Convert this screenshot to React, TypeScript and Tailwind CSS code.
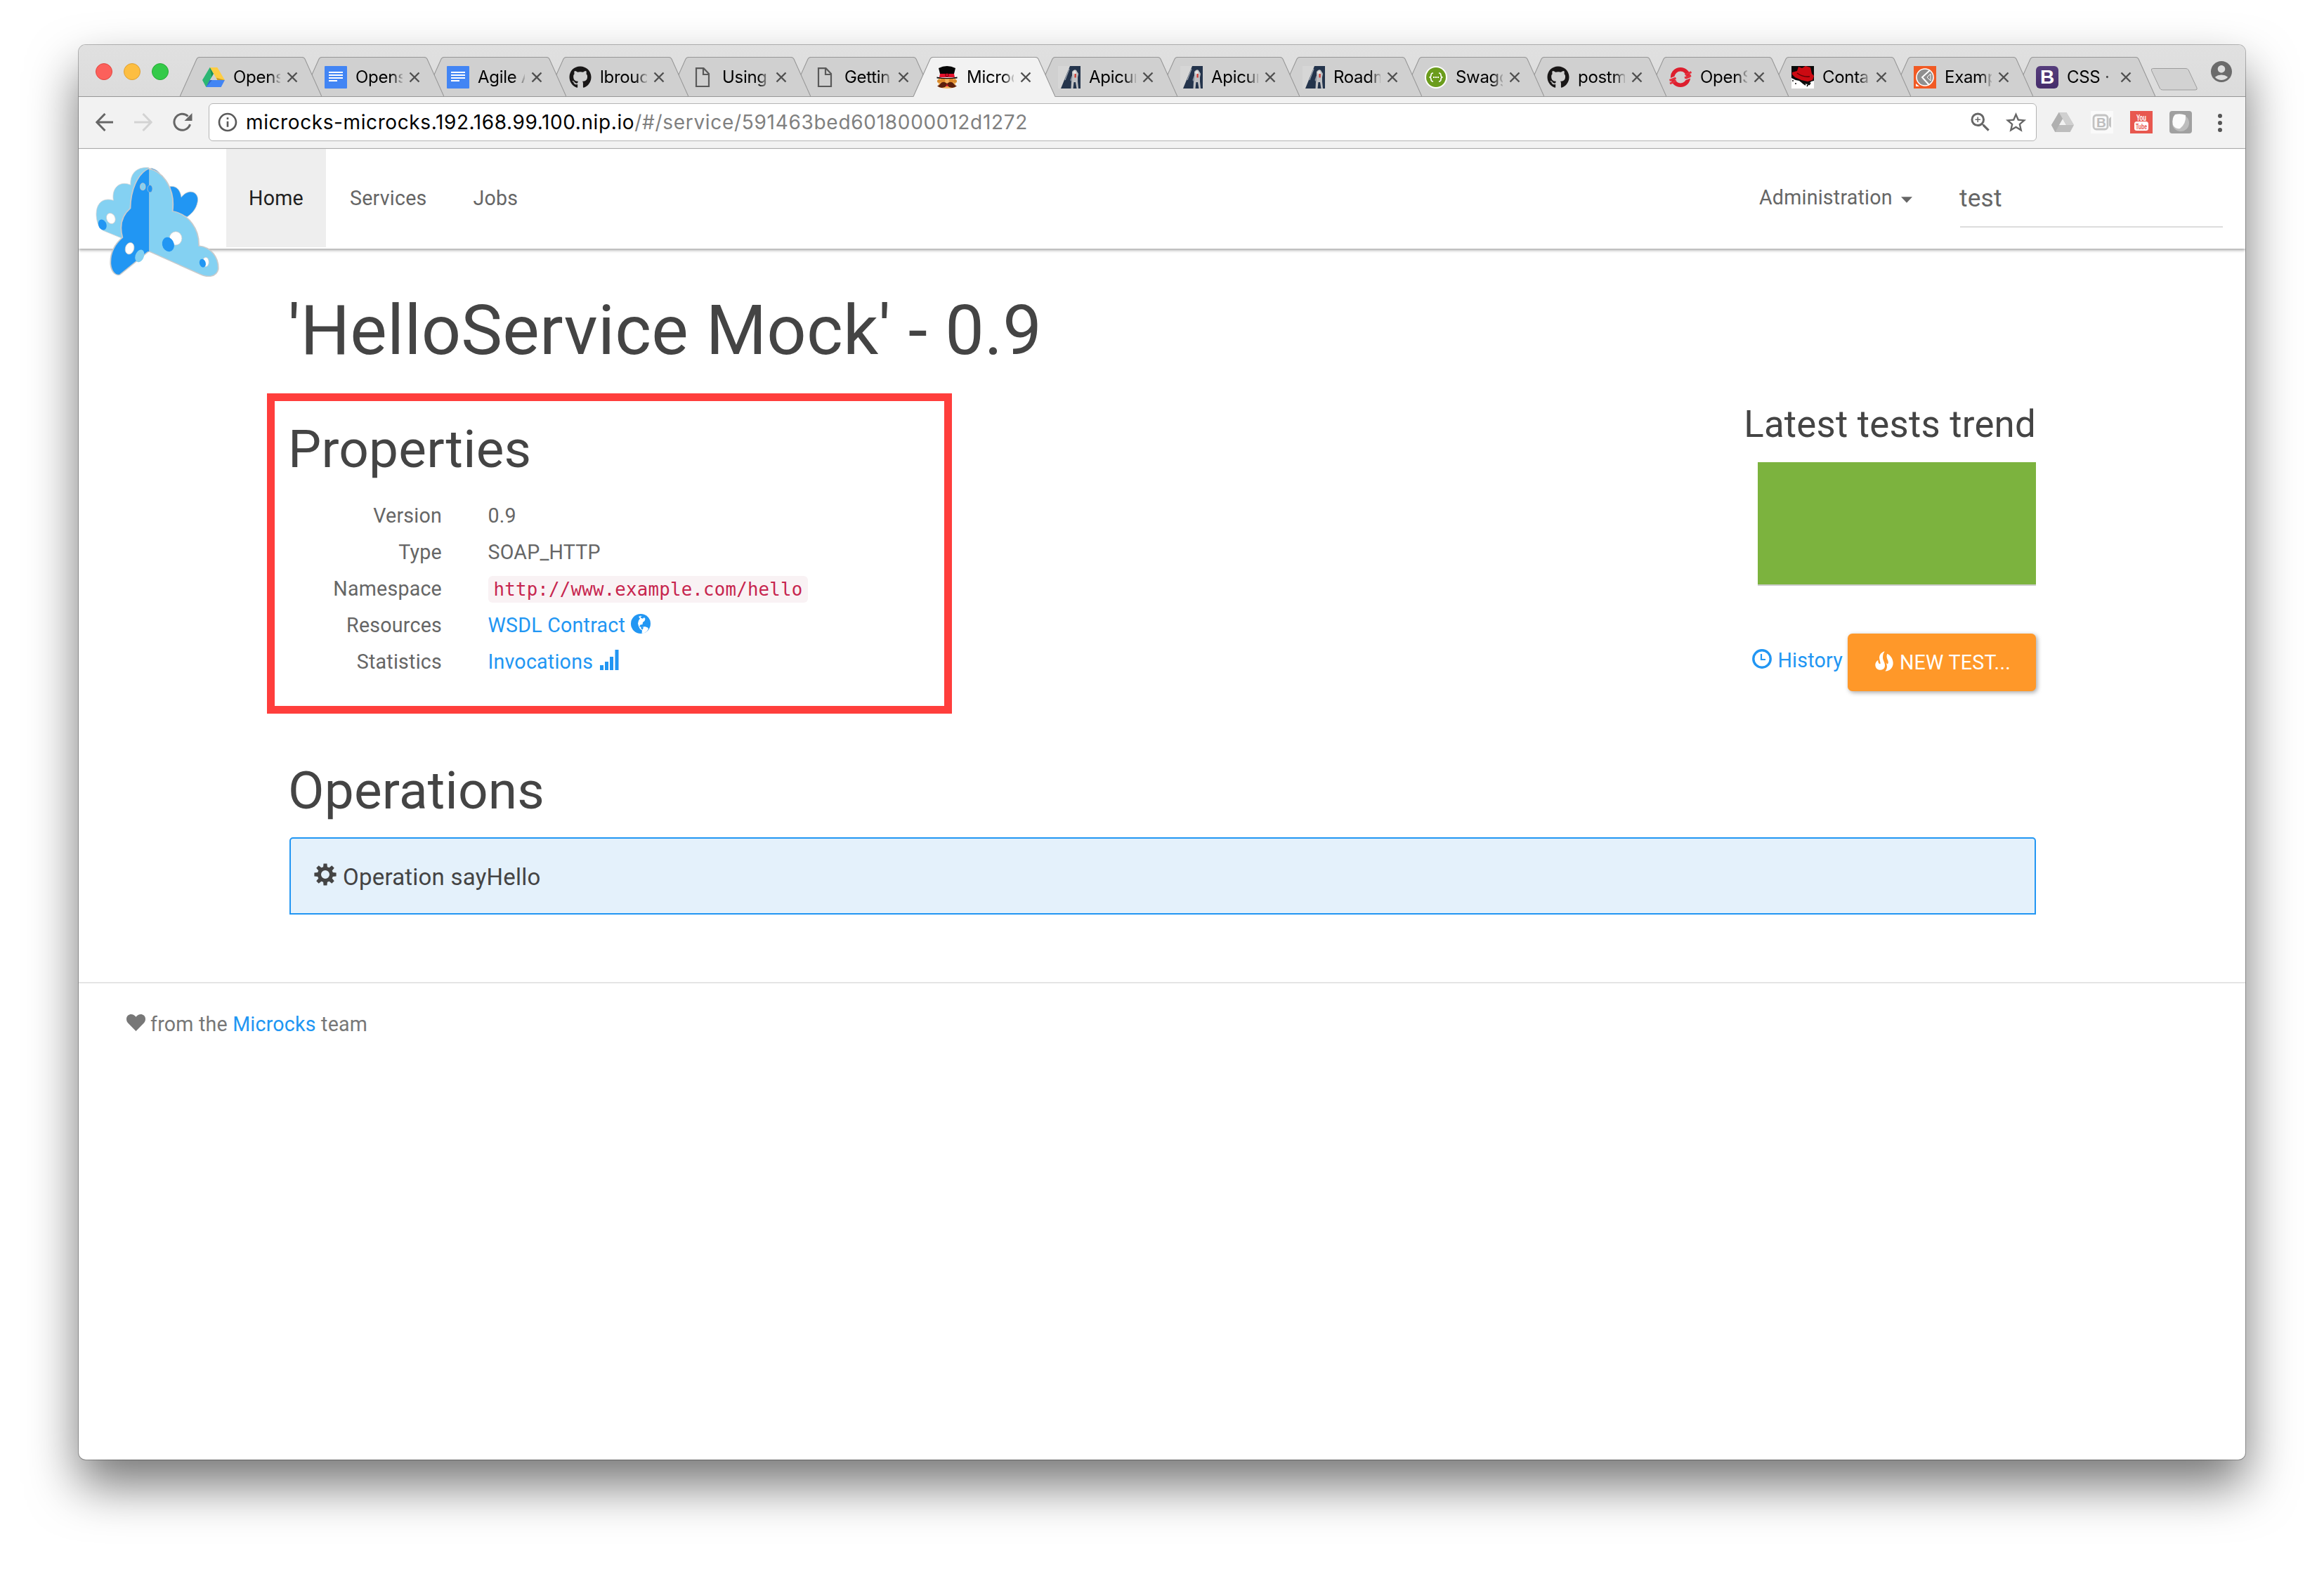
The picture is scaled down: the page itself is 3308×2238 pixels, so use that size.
import React from "react";
import { FaGithub } from "react-icons/fa";
import { MdAccountCircle, MdInfoOutline, MdStarBorder, MdZoomIn } from "react-icons/md";

/* ---------- favicons (32px) ---------- */

function DriveIcon() {
  return (
    <svg viewBox="0 0 96 96" className="size-8">
      <path d="M32 6 L64 6 L96 60 L64 60 Z" fill="#ffcd42" />
      <path d="M32 6 L0 60 L16 90 L48 34 Z" fill="#2bb673" />
      <path d="M32 60 L96 60 L80 90 L16 90 Z" fill="#4285f4" />
      <path d="M48 34 L32 6 L40 48 Z" fill="#1f8f57" />
      <path d="M64 60 L96 60 L60 50 Z" fill="#c79a22" />
      <path d="M32 60 L16 90 L42 60 Z" fill="#2f66c4" />
      <path d="M48 34 L33 60 L63 60 Z" fill="#d0d0d0" />
    </svg>
  );
}

function DocsIcon() {
  return (
    <svg viewBox="0 0 32 32" className="size-8">
      <rect width="32" height="32" rx="1" fill="#4285f4" />
      <path d="M6 9h20M6 13h20M6 17h20M6 21h12" stroke="#fff" strokeWidth="2" />
    </svg>
  );
}

function PageIcon() {
  return (
    <svg viewBox="0 0 32 32" className="size-8">
      <path d="M7 3.2h10.5L25 11v18H7z M17 3.2V12h8" fill="none" stroke="#5a5a5a" strokeWidth="2.2" />
    </svg>
  );
}

function MustacheIcon() {
  return (
    <svg viewBox="0 0 32 32" className="size-8">
      <path d="M4 17h24v13q-12 4-24 0z" fill="#f3b25e" />
      <circle cx="4.500" cy="21.500" r="2.500" fill="#d98a2b" />
      <circle cx="27.500" cy="21.500" r="2.500" fill="#d98a2b" />
      <circle cx="10" cy="21" r="3.500" fill="#e08a2a" />
      <circle cx="22" cy="21" r="3.500" fill="#e08a2a" />
      <path d="M4 3q12-6 24 0l-2 8H6z" fill="#050505" />
      <path d="M6 11h20l1 5H5z" fill="#e3122d" />
      <path d="M1.500 15.500q14.500 3 29 0v2q-14.500 1.500-29 0z" fill="#050505" />
      <circle cx="16" cy="12.800" r="2.200" fill="#e3122d" stroke="#60000d" />
      <path d="M16 25q-5-4-9-0.500-1.500 3-5 4 5 3.500 9 2 4-1 5-4 1 3 5 4 4 1.500 9-2-3.500-1-5-4-4-3.500-9 0.500z" fill="#5b1f0c" />
      <rect x="14.800" y="26.500" width="2.400" height="2.400" fill="#e3122d" />
    </svg>
  );
}

function ApicurioIcon() {
  return (
    <svg viewBox="0 0 32 32" className="size-8">
      <rect width="32" height="32" fill="#d6d6d6" />
      <path d="M17 0H32V32H4Z" fill="#24344c" />
      <path d="M16 4L10 20" stroke="#9fa6b0" strokeWidth="1.200" />
      <path d="M20 8q3-4 6-2l3 5-1 5 0 6 1 10h-2.500l-1.500-9-2.500 0-1 9h-3l0.500-10 1-5z" fill="#bfc0c3" />
      <path d="M21 9l3-3 2 4-2 4z" fill="#e6e6e6" />
      <path d="M17.500 20l2-6 1 1-1 8z" fill="#8f97a3" />
      <rect x="23.500" y="11" width="2.200" height="5.500" fill="#d3382f" />
    </svg>
  );
}

function SwaggerIcon() {
  return (
    <svg viewBox="0 0 32 32" className="size-8">
      <circle cx="16" cy="16" r="16" fill="#fff" />
      <circle cx="16" cy="16" r="14" fill="#6b9c1c" />
      <path
        d="M12 10q-3 0-3 3 0 3-2.500 3 2.500 0 2.500 3 0 3 3 3M20 10q3 0 3 3 0 3 2.500 3-2.500 0-2.500 3 0 3-3 3"
        fill="none"
        stroke="#fff"
        strokeWidth="1.600"
      />
      <path d="M12 16h2M15 16h2M18 16h2" stroke="#fff" strokeWidth="1.800" />
    </svg>
  );
}

function OpenShiftIcon() {
  return (
    <svg viewBox="0 0 32 32" className="size-8">
      <circle cx="16" cy="16" r="11.300" fill="none" stroke="#dd1f2e" strokeWidth="5.600" />
      <path d="M0.500 20.500l9-3.500M1 25l9-4" stroke="#e5303d" strokeWidth="3" />
      <path d="M22.500 12.500l9-4M22 17l9-3.500" stroke="#e5303d" strokeWidth="3" />
      <path d="M1.500 17.800l8-3.200M22 20l8.500-3.400" stroke="#d0d0d0" strokeWidth="1.300" />
    </svg>
  );
}

function RedHatIcon() {
  return (
    <svg viewBox="0 0 32 32" className="size-8">
      <rect width="32" height="32" fill="#0a0a0a" />
      <path d="M0 17L6 20 11 21 16 25 24 26 28 22 32 21V32H0z" fill="#fff" />
      <path d="M1 12l0-3 7-2 2-6 5 2 5-3 7 2 2 9 3 3-2 6-7 2-9-2-9-4z" fill="#cc0a12" />
      <path d="M8 10q8 6 18 5" fill="none" stroke="#5c0206" strokeWidth="1.500" />
      <path d="M1 21h2M5 25h2M16 24l4 3M22 29l3-5M27 24l-2 3" stroke="#0a0a0a" strokeWidth="1.600" />
    </svg>
  );
}

function ExampleIcon() {
  return (
    <svg viewBox="0 0 32 32" className="size-8">
      <rect width="32" height="32" fill="#f15a24" />
      <circle cx="16" cy="16" r="12" fill="#8f8f8f" stroke="#fff" strokeWidth="1.600" />
      <path d="M23 6L12 16l10 11" fill="none" stroke="#fff" strokeWidth="2" />
      <path d="M24 11v10l-5-5z" fill="#8f8f8f" stroke="#fff" strokeWidth="1" />
      <path d="M3 25l5 4H3z" fill="#fff" />
    </svg>
  );
}

function BootstrapIcon() {
  return (
    <span className="flex size-8 items-center justify-center rounded-[6px] bg-linear-to-b from-[#563d7c] to-[#452d6b] font-['Liberation_Sans',sans-serif] text-[28px] leading-none font-bold text-white">
      B
    </span>
  );
}

function OctocatIcon() {
  return <FaGithub className="size-8 text-[#191717]" />;
}

/* ---------- browser chrome ---------- */

const tabs: { title: string; Icon: () => React.ReactElement; active?: boolean }[] = [
  { title: "Opens", Icon: DriveIcon },
  { title: "Opens", Icon: DocsIcon },
  { title: "Agile A", Icon: DocsIcon },
  { title: "lbrouc", Icon: OctocatIcon },
  { title: "Using", Icon: PageIcon },
  { title: "Gettin", Icon: PageIcon },
  { title: "Microc", Icon: MustacheIcon, active: true },
  { title: "Apicur", Icon: ApicurioIcon },
  { title: "Apicur", Icon: ApicurioIcon },
  { title: "Roadm", Icon: ApicurioIcon },
  { title: "Swagg", Icon: SwaggerIcon },
  { title: "postm", Icon: OctocatIcon },
  { title: "OpenS", Icon: OpenShiftIcon },
  { title: "Conta", Icon: RedHatIcon },
  { title: "Examp", Icon: ExampleIcon },
  { title: "CSS ·", Icon: BootstrapIcon },
];

function Tab({ index }: { index: number }) {
  const { title, Icon, active } = tabs[index];
  return (
    <div
      className="relative -mr-7 flex h-[57px] w-[202px] shrink-0 pt-[13px] pl-8"
      style={{ zIndex: active ? 30 : 20 - index }}
    >
      <svg viewBox="0 0 202 57" className="absolute inset-0 h-[57px] w-[202px]">
        <path
          d="M0 57 L24 3 Q25.500 0.500 28 0.500 L174 0.500 Q176.500 0.500 178 3 L202 57 Z"
          fill={active ? "#f2f2f2" : "#d0d0d0"}
        />
        <path
          d="M0 56.500 L24 3 Q25.500 0.500 28 0.500 L174 0.500 Q176.500 0.500 178 3 L202 56.500"
          fill="none"
          stroke="#979797"
          strokeWidth="1.100"
        />
        {!active && <path d="M0 56.500H202" stroke="#979797" />}
      </svg>
      <span className="relative size-8 shrink-0">
        <Icon />
      </span>
      <span className="relative ml-3 w-[67px] overflow-hidden text-[24px] leading-8 tracking-[-0.3px] whitespace-nowrap text-black [mask-image:linear-gradient(to_right,#000_76%,transparent_104%)]">
        {title}
      </span>
      <svg viewBox="0 0 16 16" className="relative mt-2 ml-[9px] size-4 shrink-0">
        <path d="M1.500 1.500l13 13M14.500 1.500l-13 13" stroke="#505050" strokeWidth="2.400" />
      </svg>
    </div>
  );
}

function TabStrip() {
  return (
    <div className="flex h-[74px] border-b border-[#979797] bg-linear-to-b from-[#e0e0e0] to-[#dcdcdc]">
      <div className="flex w-36 shrink-0 gap-4 pt-[26px] pl-6">
        <span className="size-6 rounded-full border border-[#e2463f] bg-[#fc605b]" />
        <span className="size-6 rounded-full border border-[#dea032] bg-[#fdbe41]" />
        <span className="size-6 rounded-full border border-[#27aa35] bg-[#34ca49]" />
      </div>
      <div className="mt-[17px] flex h-[57px]">
        {tabs.map((_, i) => (
          <Tab key={i} index={i} />
        ))}
      </div>
      <svg viewBox="0 0 68 34" className="mt-8 ml-[21px] h-[34px] w-[68px] shrink-0">
        <path
          d="M3.500 1.500H50q3 0 4 2L66 29q1 3-2 3H17.500q-3 0-4-2L1.500 4.500q-1-3 2-3z"
          fill="#d2d2d2"
          stroke="#9c9c9c"
        />
      </svg>
      <MdAccountCircle className="mt-5 ml-[15px] size-9 shrink-0 text-[#6b6b6b]" />
    </div>
  );
}

function Toolbar() {
  return (
    <div className="flex h-[74px] border-b border-[#b4b4b4] bg-[#f2f2f2] pt-[9px]">
      <svg viewBox="0 0 26 26" className="mt-[14px] ml-6 h-[26px] w-[26px] shrink-0">
        <path d="M25 13H2M13.500 1L1.800 13l11.700 12" fill="none" stroke="#666" strokeWidth="3" />
      </svg>
      <svg viewBox="0 0 26 26" className="mt-[14px] ml-[29px] h-[26px] w-[26px] shrink-0">
        <path d="M0 13h23.500M12.500 1l11.700 12-11.700 12" fill="none" stroke="#d3d3d3" strokeWidth="3" />
      </svg>
      <svg viewBox="0 0 28 28" className="mt-[13px] ml-[29px] size-7 shrink-0">
        <path d="M24.500 17A11.500 11.500 0 1 1 21.500 5.500" fill="none" stroke="#666" strokeWidth="3" />
        <path d="M27.500 1V12H16.500z" fill="#666" />
      </svg>
      <div className="ml-[23px] flex h-[54px] w-[2602px] shrink-0 items-center rounded-[6px] border border-[#b4b4b4] bg-white pr-[11px] pl-[10px]">
        <MdInfoOutline className="size-8 text-[#5a5a5a]" />
        <p className="ml-[10px] flex-1 pt-px text-[28px] leading-[53px] text-black">
          <span className="tracking-[0.6px]">microcks-microcks.192.168.99.100.nip.io</span>
          <span className="tracking-[0.7px] text-[#808080]">/#/service/591463bed6018000012d1272</span>
        </p>
        <MdZoomIn className="size-9 text-[#666]" />
        <MdStarBorder className="ml-[15px] size-[35px] text-[#666]" />
      </div>
      <svg viewBox="0 0 96 96" className="mt-[11px] ml-[21px] size-8 shrink-0">
        <path d="M32 6H64L96 60 80 90H16L0 60Z" fill="#bdbdbd" />
        <path d="M32 6H64L96 60H64Z" fill="#d0d0d0" />
        <path d="M0 60L32 6 48 34 16 90Z" fill="#b0b0b0" />
        <path d="M48 34L33 60H63Z" fill="#f2f2f2" />
      </svg>
      <svg viewBox="0 0 32 32" className="mt-[11px] ml-6 size-8 shrink-0">
        <rect width="32" height="32" fill="#fafafa" />
        <rect x="4" y="6" width="20" height="20" rx="4" fill="none" stroke="#c3c3c3" strokeWidth="2.800" />
        <path d="M29 8v16l-3-3V11z" fill="#c3c3c3" />
        <text x="8" y="23" fontFamily="Liberation Sans, sans-serif" fontWeight="bold" fontSize="19" fill="#bdbdbd">
          B
        </text>
      </svg>
      <svg viewBox="0 0 32 32" className="mt-[11px] ml-6 size-8 shrink-0">
        <rect width="32" height="32" fill="#e8584f" />
        <rect x="6" y="15" width="20" height="13" rx="3.500" fill="#fff" />
        <text x="9" y="13.500" textLength="14" lengthAdjust="spacingAndGlyphs" fontFamily="Liberation Sans, sans-serif" fontWeight="bold" fontSize="12" fill="#fff">
          You
        </text>
        <text x="8" y="26" textLength="16" lengthAdjust="spacingAndGlyphs" fontFamily="Liberation Sans, sans-serif" fontWeight="bold" fontSize="11" fill="#e8584f">
          Tube
        </text>
      </svg>
      <svg viewBox="0 0 32 32" className="mt-[11px] ml-6 size-8 shrink-0">
        <rect width="32" height="32" rx="4" fill="#a0a0a0" />
        <circle cx="16" cy="17" r="12" fill="#bdbdbd" />
        <path d="M8 5q8-2 15 1 1 12-8 19-7 1-10-5-2-10 3-15z" fill="#fbfbfb" />
      </svg>
      <div className="mt-[15px] ml-[37px] flex flex-col gap-1">
        <span className="size-[6px] rounded-full bg-[#555]" />
        <span className="size-[6px] rounded-full bg-[#555]" />
        <span className="size-[6px] rounded-full bg-[#555]" />
      </div>
    </div>
  );
}

/* ---------- application ---------- */

function MicrocksLogo() {
  return (
    <svg viewBox="80 114 395 468" preserveAspectRatio="none" className="absolute top-[26px] left-6 h-[156px] w-[176px]">
      <g stroke="#c9cbcc" strokeWidth="4">
        <path
          d="M250 116C205 112 190 150 192 190C160 170 130 200 137 256C100 240 78 275 83 330C86 362 95 380 110 388L165 418L250 300Z"
          fill="#84d1f2"
          stroke="#d3d3d3"
          strokeWidth="2"
        />
        <path d="M318 196C345 192 352 225 354 242C380 200 412 222 406 262C402 292 388 312 373 326L318 304Z" fill="#2196f3" strokeWidth="2" />
        <path d="M256 118C275 122 287 138 290 158L262 128Z" fill="#2196f3" strokeWidth="2" />
        <path
          d="M250 120C215 140 192 210 191 290C165 320 155 360 166 414C135 450 126 490 128 530C131 562 145 580 158 573L250 473Z"
          fill="#2196f3"
        />
        <path
          d="M250 120C300 135 335 210 326 302C380 315 412 380 410 450C450 455 474 500 472 550C466 585 436 586 415 572L250 473Z"
          fill="#84d1f2"
        />
      </g>
      <path d="M248.500 124V474" stroke="#2196f3" strokeWidth="5" />
      <ellipse cx="221" cy="493" rx="14" ry="27" fill="#84d1f2" transform="rotate(12 221 493)" />
      <ellipse cx="231" cy="197" rx="8" ry="15" fill="#84d1f2" stroke="#b9c6cd" strokeWidth="3" />
      <ellipse cx="254" cy="206" rx="8" ry="16" fill="#2196f3" stroke="#b9c6cd" strokeWidth="2" />
      <ellipse cx="129" cy="333" rx="14" ry="23" fill="#fff" stroke="#ccc" strokeWidth="2" transform="rotate(-10 129 333)" />
      <ellipse cx="102" cy="360" rx="13" ry="23" fill="#2196f3" transform="rotate(-10 102 360)" />
      <ellipse cx="189" cy="461" rx="14" ry="25" fill="#fff" stroke="#ccc" strokeWidth="2" transform="rotate(8 189 461)" />
      <ellipse cx="336" cy="418" rx="20" ry="29" fill="#fff" stroke="#ccc" strokeWidth="2" />
      <ellipse cx="312" cy="444" rx="19" ry="31" fill="#2196f3" transform="rotate(-8 312 444)" />
      <ellipse cx="432" cy="519" rx="10" ry="20" fill="#fff" stroke="#ccc" strokeWidth="2" />
      <ellipse cx="422" cy="524" rx="10" ry="18" fill="#2196f3" transform="rotate(-8 422 524)" />
    </svg>
  );
}

function Navbar() {
  return (
    <nav className="relative flex h-[142px] bg-white pl-[210px] text-[28.6px] leading-[52px] tracking-[0.22px] text-[#666] shadow-[0_2.2px_4.4px_rgba(0,0,0,0.38)]">
      <MicrocksLogo />
      <a className="h-[140px] w-[142px] bg-[#eee] pt-11 text-center text-[#212121]">Home</a>
      <a className="pt-11 pl-[34px]">Services</a>
      <a className="pt-11 pl-[66px]">Jobs</a>
      <div className="ml-auto flex w-[692px]">
        <a className="w-[202px] pt-[43px]">Administration</a>
        <svg viewBox="0 0 17 9" className="mt-[68px] h-[9px] w-[16px]">
          <path d="M0 0h17L8.500 9z" fill="#666" />
        </svg>
        <div className="ml-[68px] h-28 w-[374px] border-b-2 border-[#ddd] pt-11 text-[35.2px]">
          <span className="-ml-px">test</span>
        </div>
      </div>
    </nav>
  );
}

function GlobeIcon() {
  return (
    <svg viewBox="0 0 28 28" className="mt-[10px] ml-2 size-7">
      <circle cx="14" cy="14" r="14" fill="#2196f3" />
      <path
        d="M11 4l3-1.500 2 1.500-1 1.500 2 1 2-1.500 1.500 2-1 3-2.500 2-0.500 3-3 0.500-1.500 2.500 3.500 1 4.500-1 4 1.500 1 2-2.500 3.500-4.500 3-2.500-0.500 0.500-4-3-2-2-4-1-4 1-4 2-3z"
        fill="#fff"
      />
      <path d="M13.500 3.500l2.500 0.500 3-0.500-2 3-2.500-0.500z" fill="#2196f3" />
      <path d="M14.500 18.500l3.500 1-1.500 3-2-1.500z" fill="#2196f3" />
    </svg>
  );
}

function SignalIcon() {
  return (
    <svg viewBox="0 0 27 29" className="mt-[9px] ml-[10px] h-[29px] w-[27px]">
      <path d="M0 22h5v7H0zM7 17h5v12H7zM14 10h5v19h-5zM21.500 0h5v29h-5z" fill="#2196f3" />
    </svg>
  );
}

function ClockIcon() {
  return (
    <svg viewBox="0 0 28 28" className="mt-[10px] mr-[8px] size-7">
      <circle cx="14" cy="14" r="12.200" fill="none" stroke="#2196f3" strokeWidth="3.400" />
      <path d="M13 7v8h6" fill="none" stroke="#2196f3" strokeWidth="2.200" />
    </svg>
  );
}

function FireIcon() {
  return (
    <svg viewBox="0 0 78 86" className="mt-[10px] mr-[9px] h-[29px] w-[26px]">
      <path
        d="M41 0C22 6 16 20 19 34C20 42 25 50 22 54C16 55 12 48 13 38C4 44 0 52 1 60C3 74 12 80 24 80C37 79 43 70 42 58C41 46 33 40 33 26C33 14 36 8 41 0Z"
        fill="#fff"
      />
      <path
        d="M52 11C47 22 51 31 55 40C58 48 56 56 52 54C49 52 48 49 46 45C50 58 56 70 43 85C62 86 78 70 77 50C76 32 66 17 52 11Z"
        fill="#fff"
      />
    </svg>
  );
}

const gearPath = (() => {
  const points: string[] = [];
  const at = (r: number, deg: number) => {
    const a = (deg * Math.PI) / 180;
    points.push(`${(16 + r * Math.cos(a)).toFixed(2)} ${(16 + r * Math.sin(a)).toFixed(2)}`);
  };
  for (let i = 0; i < 8; i++) {
    const c = i * 45;
    at(11.2, c - 15);
    at(15.8, c - 9);
    at(15.8, c + 9);
    at(11.2, c + 15);
  }
  return `M${points.join("L")}ZM22 16A6 6 0 1 0 10 16A6 6 0 1 0 22 16Z`;
})();

function GearIcon() {
  return (
    <svg viewBox="0 0 32 32" className="mr-[9px] size-8">
      <path d={gearPath} fillRule="evenodd" fill="#444" />
    </svg>
  );
}

function HeartIcon() {
  return (
    <svg viewBox="0 0 80 71" className="mt-3 mr-[7px] h-6 w-[27px]">
      <path d="M40 71L6 36C-2 27-2 12 6 5C17-4 32 0 40 11C48 0 63-4 74 5C82 12 82 27 74 36Z" fill="#777" />
    </svg>
  );
}

function Property({ label, children }: { label: string; children: React.ReactNode }) {
  return (
    <div className="flex h-[52px]">
      <dt className="w-[217px] text-right">{label}</dt>
      <dd className="ml-[65.5px] flex">{children}</dd>
    </div>
  );
}

function ServicePage() {
  return (
    <main className="pt-[61px] pr-[298px] pl-[300px] text-[28.6px] leading-[52px] tracking-[0.22px] text-[#666]">
      <h1 className="-ml-0.5 text-[99px] leading-[110px] text-[#444]">'HelloService Mock' - 0.9</h1>

      <div className="mt-[35px] flex justify-between">
        <section className="-ml-8 h-[456px] w-[975px] border-[11px] border-[#ff3e3c] pt-7 pl-[21px]">
          <h2 className="mb-[27px] -ml-0.5 text-[74.8px] leading-[82px] text-[#444]">Properties</h2>
          <dl>
            <Property label="Version">0.9</Property>
            <Property label="Type">SOAP_HTTP</Property>
            <Property label="Namespace">
              <code className="mt-2 h-[38px] rounded-[6px] bg-[#f9f2f4] px-2 font-['DejaVu_Sans_Mono',monospace] text-[25.74px] leading-[38px] text-[#c7254e]">
                http://www.example.com/hello
              </code>
            </Property>
            <Property label="Resources">
              <a className="flex text-[#2196f3]">
                WSDL Contract
                <GlobeIcon />
              </a>
            </Property>
            <Property label="Statistics">
              <a className="flex text-[#2196f3]">
                Invocations
                <SignalIcon />
              </a>
            </Property>
          </dl>
        </section>

        <aside className="flex flex-col items-end pt-[15px]">
          <h3 className="text-[52.8px] leading-[58px] text-[#444]">Latest tests trend</h3>
          <div className="mt-[25px] h-44 w-[396px] border-b-2 border-[#ccc] bg-[#7cb33e] bg-clip-padding" />
          <div className="mt-[68px] flex">
            <a className="mt-3 mr-[7px] flex text-[#2196f3]">
              <ClockIcon />
              History
            </a>
            <button className="flex h-[82px] w-[268px] rounded-[6.6px] bg-[#ff9829] pt-[15px] pl-[39px] text-white shadow-[2px_2px_6px_rgba(0,0,0,0.35)]">
              <FireIcon />
              NEW TEST...
            </button>
          </div>
        </aside>
      </div>

      <h2 className="mt-[69px] -ml-0.5 text-[74.8px] leading-[82px] text-[#444]">Operations</h2>
      <div className="mt-[25px] flex h-[110px] rounded-t-[5px] border-2 border-[#2196f3] bg-[#e4f1fb] pt-[35px] pl-[33px] text-[33px] leading-10 text-[#444]">
        <GearIcon />
        Operation sayHello
      </div>
    </main>
  );
}

function Footer() {
  return (
    <footer className="mt-24 flex border-t-2 border-[#e5e5e5] pt-8 pl-[68px] text-[28.6px] leading-[52px] tracking-[0.22px] text-[#777]">
      <HeartIcon />
      <p>
        from the <a className="text-[#2196f3]">Microcks</a> team
      </p>
    </footer>
  );
}

export default function App() {
  return (
    <div className="h-[2238px] w-full overflow-hidden bg-white px-28 pt-16 font-[Roboto,sans-serif]">
      <div className="h-[2014px] w-[3084px] overflow-hidden rounded-[10px] bg-white shadow-[0_0_0_1px_rgba(0,0,0,0.27),0_36px_70px_rgba(0,0,0,0.54)]">
        <header className="font-[Inter,sans-serif]">
          <TabStrip />
          <Toolbar />
        </header>
        <Navbar />
        <ServicePage />
        <Footer />
      </div>
    </div>
  );
}
